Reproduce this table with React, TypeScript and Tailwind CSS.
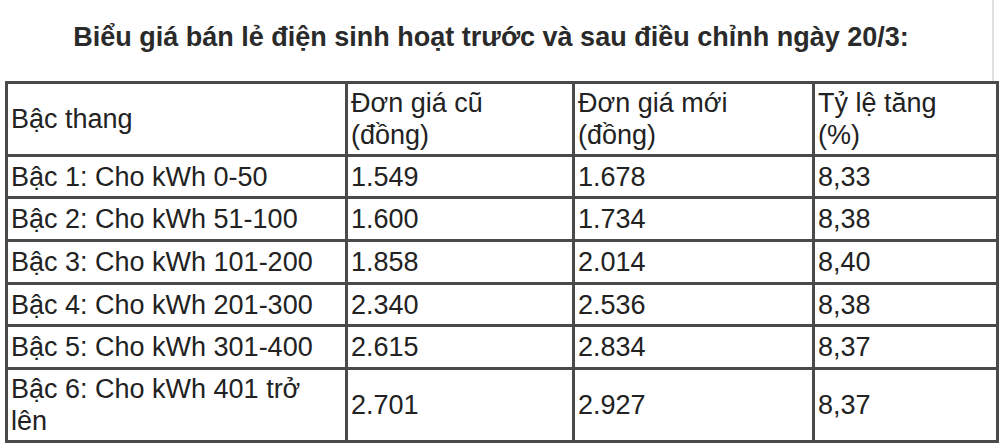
const rows: [string, string, string, string][] = [
  ["Bậc 1: Cho kWh 0-50", "1.549", "1.678", "8,33"],
  ["Bậc 2: Cho kWh 51-100", "1.600", "1.734", "8,38"],
  ["Bậc 3: Cho kWh 101-200", "1.858", "2.014", "8,40"],
  ["Bậc 4: Cho kWh 201-300", "2.340", "2.536", "8,38"],
  ["Bậc 5: Cho kWh 301-400", "2.615", "2.834", "8,37"],
];

const rowHeights = ["h-[42px]", "h-[43px]", "h-[43px]", "h-[42px]", "h-[43px]"];

export default function App() {
  const cell = "border-[3px] border-[#4a4a4a] px-[3px] align-middle text-left font-normal";
  return (
    <div
      className="w-[1000px] h-[443px] overflow-hidden bg-white text-[#222]"
      style={{ fontFamily: '"Liberation Sans", Arial, sans-serif' }}
    >
      <div className="w-[994px] h-[81px] border-r-2 border-[#e0e0e0]">
        <h1 className="w-[982px] pt-[21px] text-center text-[27px] leading-[32px] font-bold text-[#2a2a2a]">
          Biểu giá bán lẻ điện sinh hoạt trước và sau điều chỉnh ngày 20/3:
        </h1>
      </div>
      <table className="ml-[5px] w-[991px] border-collapse text-[27px] leading-[32px] table-fixed">
        <colgroup>
          <col className="w-[340px]" />
          <col className="w-[227px]" />
          <col className="w-[240px]" />
          <col className="w-[184px]" />
        </colgroup>
        <thead>
          <tr className="h-[73px]">
            <th className={cell}>Bậc thang</th>
            <th className={cell}>
              Đơn giá cũ
              <br />
              (đồng)
            </th>
            <th className={cell}>
              Đơn giá mới
              <br />
              (đồng)
            </th>
            <th className={cell}>
              Tỷ lệ tăng
              <br />
              (%)
            </th>
          </tr>
        </thead>
        <tbody>
          {rows.map((r, i) => (
            <tr key={r[0]} className={rowHeights[i]}>
              {r.map((v) => (
                <td key={v} className={cell}>
                  {v}
                </td>
              ))}
            </tr>
          ))}
          <tr className="h-[73px]">
            <td className={cell}>
              Bậc 6: Cho kWh 401 trở
              <br />
              lên
            </td>
            <td className={cell}>2.701</td>
            <td className={cell}>2.927</td>
            <td className={cell}>8,37</td>
          </tr>
        </tbody>
      </table>
    </div>
  );
}
